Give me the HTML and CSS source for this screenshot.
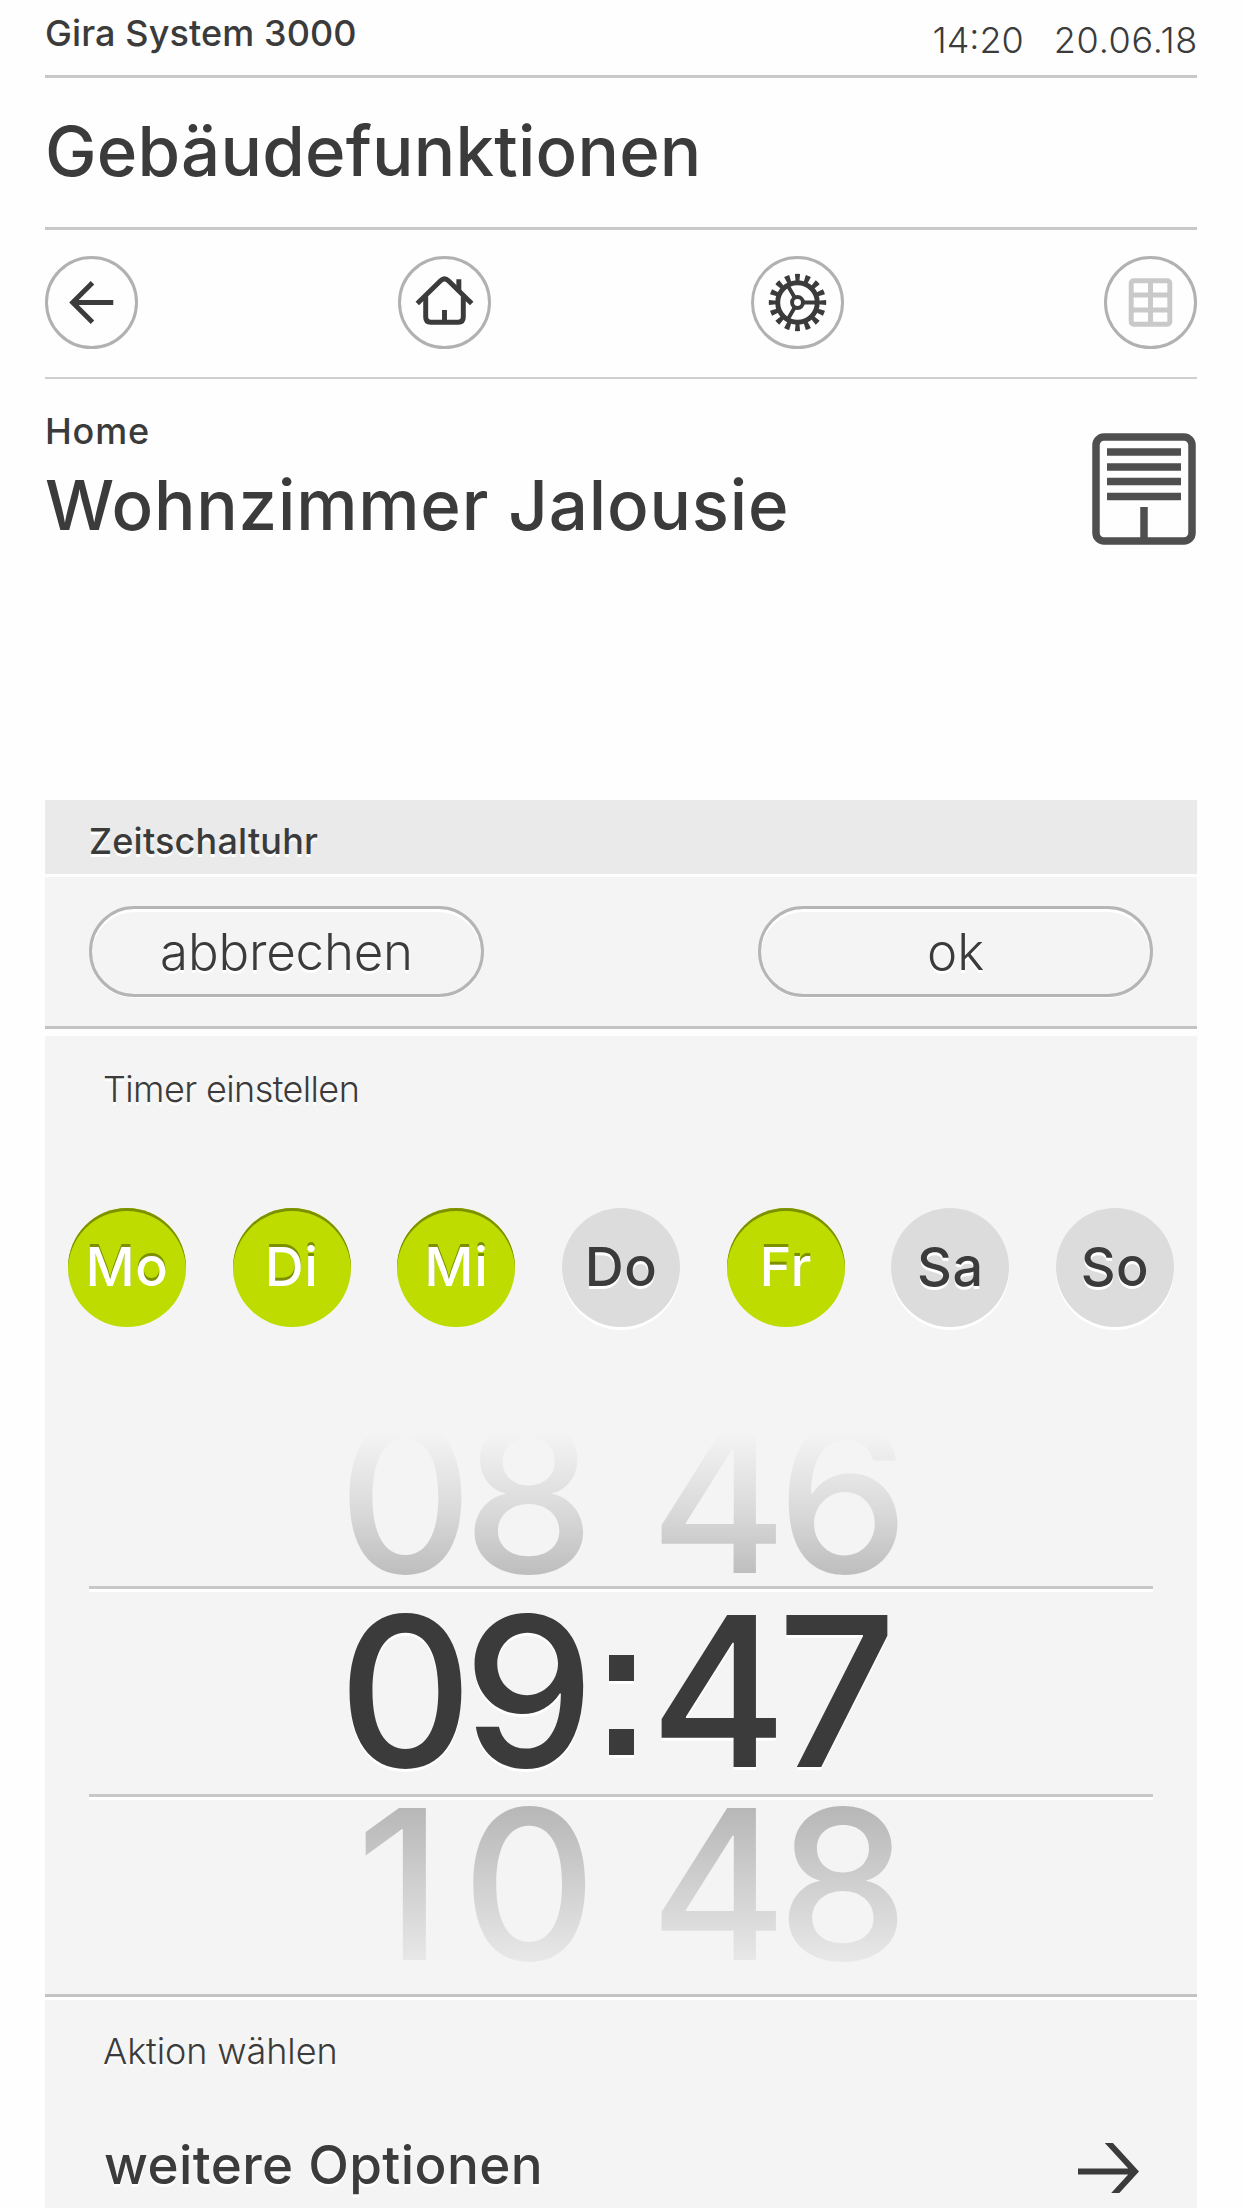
FILE: index.html
```html
<!DOCTYPE html>
<html lang="de">
<head>
    <meta charset="UTF-8">
    <meta name="viewport" content="width=device-width, initial-scale=1.0">
    <title>Gira System 3000</title>
    <link rel="stylesheet" href="styles.css">
</head>
<body>
    <div class="app">
        <header class="status">
            <span class="system">Gira System 3000</span>
            <div class="clock">
                <span>14:20</span>
                <span class="date">20.06.18</span>
            </div>
        </header>

        <h1 class="title">Gebäudefunktionen</h1>

        <nav class="nav">
            <button class="nav-button" aria-label="Zurück">
                <svg viewBox="0 0 94 94">
                    <path d="M69 47H29M48 27L28 47l20 20" />
                </svg>
            </button>
            <button class="nav-button" aria-label="Home">
                <svg viewBox="0 0 94 94">
                    <path d="M19.500 48L43 25q4-4 8 0L74.500 48" />
                    <path d="M28 41V62q0 5 5 5H61q5 0 5-5V41M61.500 23.500V36M47 54.500V67" />
                </svg>
            </button>
            <button class="nav-button" aria-label="Einstellungen">
                <svg viewBox="0 0 94 94">
                    <circle cx="47" cy="47" r="20" />
                    <!-- teeth: 16 around the ring -->
                    <circle class="teeth" cx="47" cy="47" r="25" pathLength="160" />
                    <circle class="hub" cx="47" cy="47" r="5.500" />
                    <path class="spokes" d="M53 47H66M44 41.800L37 29.700M44 52.200L37 64.300" />
                </svg>
            </button>
            <button class="nav-button disabled" aria-label="Kacheln">
                <svg viewBox="0 0 94 94">
                    <rect x="27.500" y="25" width="39" height="44" rx="2.500" />
                    <path d="M47 25V69M27 39.500H67M27 54.500H67" />
                </svg>
            </button>
        </nav>

        <section class="device">
            <div>
                <p class="room">Home</p>
                <h2 class="device-name">Wohnzimmer Jalousie</h2>
            </div>
            <svg class="blind" viewBox="0 0 104 112">
                <rect x="4" y="4" width="96" height="104" rx="8" />
                <path d="M15 19H89M15 34H89M15 48.500H89M15 63.500H89M52 74V106" />
            </svg>
        </section>

        <main class="timer">
            <h3 class="timer-title">Zeitschaltuhr</h3>

            <div class="actions">
                <button class="pill">abbrechen</button>
                <button class="pill">ok</button>
            </div>

            <section class="settings">
                <p class="label">Timer einstellen</p>

                <div class="days">
                    <button class="day active">Mo</button>
                    <button class="day active">Di</button>
                    <button class="day active">Mi</button>
                    <button class="day">Do</button>
                    <button class="day active">Fr</button>
                    <button class="day">Sa</button>
                    <button class="day">So</button>
                </div>

                <div class="picker">
                    <div class="time previous">
                        <span>08</span>
                        <span></span>
                        <span>46</span>
                    </div>
                    <div class="time current">
                        <span>09</span>
                        <span class="colon"><i></i><i></i></span>
                        <span class="minutes">47</span>
                    </div>
                    <div class="time next">
                        <span class="hours">10</span>
                        <span></span>
                        <span>48</span>
                    </div>
                </div>
            </section>

            <section class="options">
                <p class="label action-label">Aktion wählen</p>
                <a class="more">
                    <span>weitere Optionen</span>
                    <svg viewBox="0 0 62 50">
                        <path d="M1 28.500H57M30 -2L58 28.500L30 59" />
                    </svg>
                </a>
            </section>
        </main>
    </div>
</body>
</html>
```
FILE: styles.css
```css
* {
    box-sizing: border-box;
    margin: 0;
    padding: 0;
}

body {
    background-color: #fefefe;
    color: #3b3b3b;
    font-family: Inter, "Liberation Sans", sans-serif;
    font-weight: 500;
}

button {
    border: none;
    background: none;
    color: inherit;
    font: inherit;
    cursor: pointer;
}

svg {
    fill: none;
    stroke: #3b3b3b;
    stroke-width: 5;
}

.app {
    height: 2208px;
    padding: 0 45px;
    overflow: hidden;
}

/* header */

.status {
    display: flex;
    justify-content: space-between;
    height: 78px;
    border-bottom: 3px solid #c8c8c8;
    font-size: 36px;
    line-height: 67px;
}

.system {
    letter-spacing: 0.1px;
}

.clock {
    display: flex;
    gap: 30px;
    line-height: 80px;
    font-weight: 300;
}

.date {
    margin-right: -1px;
    letter-spacing: 0.7px;
}

.title {
    height: 152px;
    border-bottom: 3px solid #c8c8c8;
    font-size: 69px;
    font-weight: 500;
    line-height: 147px;
    letter-spacing: 0.2px;
}

.nav {
    display: flex;
    justify-content: space-between;
    height: 149px;
    padding-top: 26px;
    border-bottom: 2px solid #cfcfcf;
}

.nav-button {
    width: 93px;
    height: 93px;
    border: 3px solid #b1b1b1;
    border-radius: 50%;
}

.nav-button svg {
    display: block;
    width: 93px;
    height: 93px;
    margin: -3px;
}

.nav-button .teeth {
    stroke-width: 8;
    stroke-dasharray: 4.800 5.200;
    stroke-dashoffset: 2.400;
}

.nav-button .hub,
.nav-button .spokes {
    stroke-width: 4;
}

.nav-button.disabled svg {
    stroke: #c9c9c9;
}

/* device */

.device {
    display: flex;
    justify-content: space-between;
    height: 421px;
    padding-top: 30px;
}

.room {
    font-size: 36px;
    line-height: 44px;
    letter-spacing: 0.8px;
}

.device-name {
    font-size: 69px;
    font-weight: 500;
    line-height: 104px;
    letter-spacing: 0.8px;
}

.blind {
    width: 104px;
    height: 112px;
    margin: 24px 1px 0 0;
    stroke: #4f4f4f;
    stroke-width: 7.500;
}

/* timer */

.timer {
    text-shadow: 0 3px 0 #fff;
}

.timer-title {
    height: 74px;
    padding-left: 44px;
    background-color: #eaeaea;
    font-size: 36px;
    font-weight: 500;
    line-height: 82px;
    letter-spacing: 0.2px;
}

.actions {
    display: flex;
    justify-content: space-between;
    height: 152px;
    margin-top: 3px;
    padding: 29px 44px 0;
    background-color: #f4f4f4;
    border-bottom: 3px solid #c3c3c3;
}

.pill {
    width: 395px;
    height: 91px;
    border: 3px solid #b5b5b5;
    border-radius: 46px;
    box-shadow: inset 0 3px 0 #fff, 0 1px 0 #fff;
    font-size: 51px;
    font-weight: 300;
    letter-spacing: -0.2px;
    text-shadow: 0 3px 0 #fff;
}

.settings {
    height: 961px;
    margin-top: 7px;
    background-color: #f4f4f4;
    border-bottom: 3px solid #c3c3c3;
}

.label {
    padding-left: 58px;
    font-size: 36px;
    font-weight: 300;
    line-height: 107px;
    letter-spacing: -0.6px;
}

.days {
    display: flex;
    justify-content: space-between;
    margin-top: 65px;
    padding: 0 23px;
}

.day {
    width: 118px;
    height: 119px;
    padding-bottom: 2px;
    border-radius: 50%;
    background-color: #dcdcdc;
    box-shadow: 0 3px 0 #fff;
    font-size: 54px;
    line-height: 113px;
    letter-spacing: 0.5px;
    text-shadow: 0 3px 0 #fff;
}

.day.active {
    background-color: #bedc00;
    box-shadow: inset 0 3px 0 #7c9000;
    color: #fff;
    text-shadow: 0 -3px 0 #7c9000;
}

/* time wheel */

.picker {
    margin: 106px 44px 0;
}

.time {
    display: grid;
    grid-template-columns: 254px 58px 254px;
    justify-content: center;
    font-size: 209px;
    letter-spacing: -10px;
}

.previous,
.next {
    color: transparent;
    text-shadow: none;
    -webkit-background-clip: text;
    background-clip: text;
}

.previous {
    height: 153px;
    line-height: 129px;
    background-image: linear-gradient(#f4f4f4, #dadada 50%, #bcbcbc 95%);
}

.current {
    height: 211px;
    border-top: 3px solid #c8c8c8;
    border-bottom: 3px solid #c8c8c8;
    box-shadow: inset 0 3px 0 #fff, 0 3px 0 #fff;
    line-height: 204px;
}

.next {
    height: 194px;
    line-height: 175px;
    background-image: linear-gradient(#b7b7b7 5%, #e8e8e8 85%, #f4f4f4);
}

/* the narrow 1 still has to fill a full digit */
.next .hours {
    padding-left: 18px;
    letter-spacing: 19px;
}

.colon {
    display: flex;
    flex-direction: column;
    align-items: center;
    gap: 48px;
    padding-top: 66px;
}

.colon i {
    width: 25px;
    height: 26px;
    background-color: #3b3b3b;
    box-shadow: 0 3px 0 #fff;
}

/* options */

.options {
    height: 211px;
    background-color: #f4f4f4;
    box-shadow: inset 0 3px 0 #fff;
}

.action-label {
    line-height: 108px;
    letter-spacing: -0.1px;
}

.more {
    display: flex;
    justify-content: space-between;
    padding: 25px 58px 0 59px;
    font-size: 53px;
    line-height: 70px;
    letter-spacing: 0.4px;
}

.more svg {
    width: 62px;
    height: 50px;
    margin-top: 13px;
    stroke-width: 6;
}
```
